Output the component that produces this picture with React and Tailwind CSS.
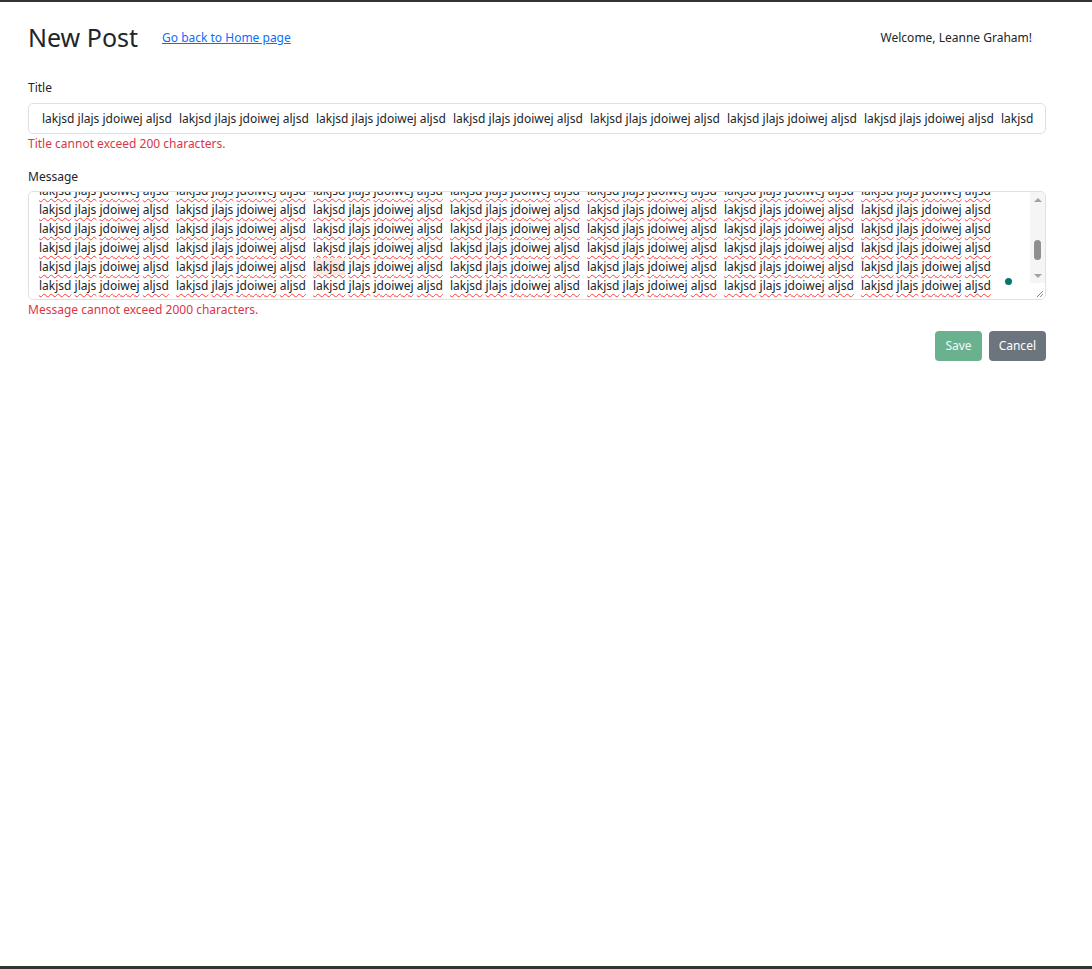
import { useMemo } from 'react'

const CHUNK = ['lakjsd', 'jlajs', 'jdoiwej', 'aljsd']

function Words({ wavy, highlight }) {
  return (
    <span className="inline-block w-[137px] whitespace-nowrap">
      {CHUNK.map((w, i) => (
        <span key={i}>
          <span
            className={
              (wavy ? 'underline decoration-wavy decoration-[#ff3b3b] decoration-1 underline-offset-[3px] ' : '') +
              (highlight && i === 0 ? 'bg-[#fbe9e3]' : '')
            }
          >
            {w}
          </span>
          {i < 3 ? ' ' : ''}
        </span>
      ))}
    </span>
  )
}

function ScrollBar() {
  return (
    <div className="flex flex-col w-[15px] bg-[#f5f5f5] h-full">
      <div className="flex items-center justify-center h-[15px]">
        <div className="w-0 h-0 border-l-[4px] border-r-[4px] border-b-[4px] border-l-transparent border-r-transparent border-b-[#a3a3a3]" />
      </div>
      <div className="flex-1 flex flex-col px-[4px]">
        <div className="h-[33px]" />
        <div className="h-[20px] rounded-full bg-[#8f8f8f]" />
        <div className="flex-1" />
      </div>
      <div className="flex items-center justify-center h-[15px]">
        <div className="w-0 h-0 border-l-[4px] border-r-[4px] border-t-[4px] border-l-transparent border-r-transparent border-t-[#a3a3a3]" />
      </div>
      <div className="h-[16px] bg-white flex items-end justify-end pr-[1px] pb-[1px]">
        <svg width="8" height="8" viewBox="0 0 8 8">
          <path d="M7 1 L1 7 M7 4 L4 7" stroke="#8a8a8a" strokeWidth="1" />
        </svg>
      </div>
    </div>
  )
}

export default function App() {
  const rows = useMemo(() => Array.from({ length: 6 }), [])
  const cols = useMemo(() => Array.from({ length: 7 }), [])

  return (
    <div
      className="min-h-[969px] bg-white border-t-2 border-b-[3px] border-[#333] text-[#212529]"
      style={{ fontFamily: '"Noto Sans", "Open Sans", sans-serif' }}
    >
      <div className="pl-[28px] pr-[46px]">
        {/* Header */}
        <div className="flex items-center pt-[17px] h-[51px]">
          <h2 className="text-[25px] leading-none font-normal text-[#212529] mt-[2px]">New Post</h2>
          <a href="#" className="ml-[24px] mt-[4px] text-[12px] text-[#0d6efd] underline">
            Go back to Home page
          </a>
          <span className="ml-auto mr-[14px] mt-[3px] text-[12px] text-[#212529]">
            Welcome, Leanne Graham!
          </span>
        </div>

        {/* Title */}
        <div className="mt-[26px]">
          <label className="block text-[12px] leading-[18px]">Title</label>
          <div className="mt-[6px] h-[31px] border border-[#dee2e6] rounded-[5px] pl-[13px] pr-[12px] flex items-center text-[12px]">
            <div className="min-w-0 flex-1 overflow-hidden whitespace-nowrap">
              {cols.concat([0, 1]).map((_, i) => (
                <span key={i} className="inline-block w-[137px] whitespace-nowrap">
                  {CHUNK.join(' ')}
                </span>
              ))}
            </div>
          </div>
          <p className="mt-[1px] text-[12px] leading-[18px] text-[#dc3545]">Title cannot exceed 200 characters.</p>
        </div>

        {/* Message */}
        <div className="mt-[15px]">
          <label className="block text-[12px] leading-[18px]">Message</label>
          <div className="mt-[5px] h-[109px] border border-[#dee2e6] rounded-[5px] flex overflow-hidden relative">
            <div className="flex-1 overflow-hidden pl-[10px]">
              <div className="-mt-[11px] text-[12px] leading-[19px] whitespace-nowrap">
                {rows.map((_, r) => (
                  <div key={r}>
                    {cols.map((_, c) => (
                      <Words key={c} wavy highlight={r === 4 && c === 2} />
                    ))}
                  </div>
                ))}
              </div>
            </div>
            <div className="absolute right-[33px] bottom-[14px] w-[7px] h-[7px] rounded-full bg-[#00796b]" />
            <ScrollBar />
          </div>
          <p className="mt-[1px] text-[12px] leading-[18px] text-[#dc3545]">Message cannot exceed 2000 characters.</p>
        </div>

        {/* Buttons */}
        <div className="flex justify-end gap-[7px] mt-[12px]">
          <button className="h-[30px] px-[10px] rounded-[4px] bg-[#6ab190] text-[#f3f8f5] text-[12px]">Save</button>
          <button className="h-[30px] px-[10px] rounded-[4px] bg-[#6c757d] text-white text-[12px]">Cancel</button>
        </div>
      </div>
    </div>
  )
}
